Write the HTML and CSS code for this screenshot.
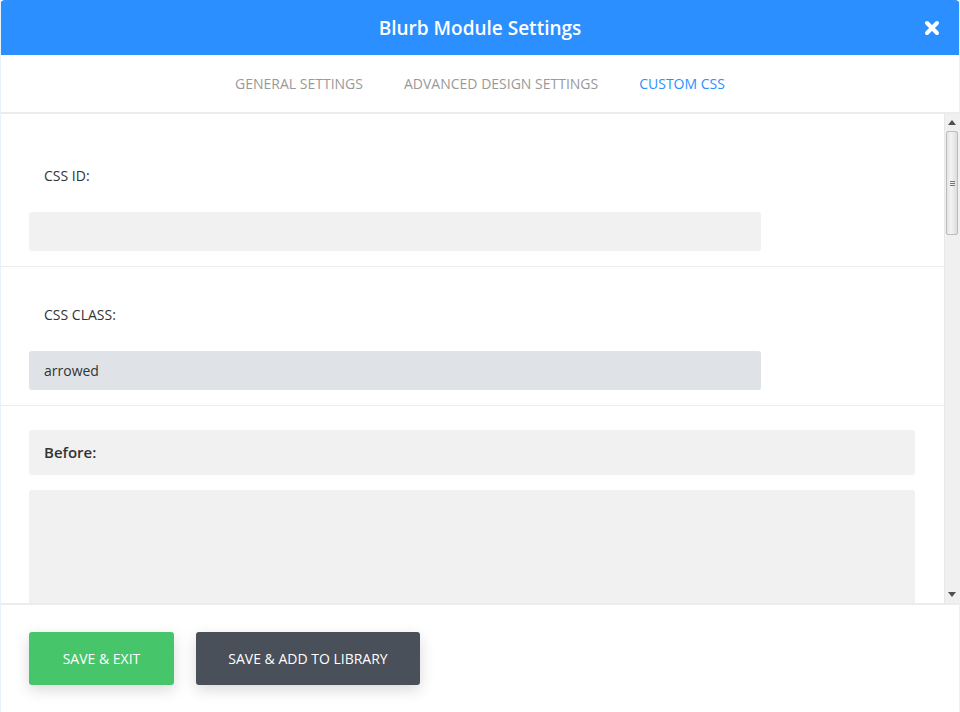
FILE: index.html
```html
<!DOCTYPE html>
<html>
<head>
<meta charset="utf-8">
<link rel="stylesheet" href="styles.css">
</head>
<body>
<div class="modal">
  <header class="head">
    <h1 class="title">Blurb Module Settings</h1>
    <span class="close"><svg width="16" height="16" viewBox="0 0 16 16"><path d="M3 3L13 13M13 3L3 13" stroke="#fff" stroke-width="4" stroke-linecap="round"/></svg></span>
  </header>
  <nav class="tabs">
    <span class="tab">General Settings</span>
    <span class="tab">Advanced Design Settings</span>
    <span class="tab active">Custom CSS</span>
  </nav>
  <div class="body">
    <div class="content">
      <section class="sec sec-first">
        <label class="lbl">CSS ID:</label>
        <div class="input"></div>
      </section>
      <section class="sec">
        <label class="lbl">CSS CLASS:</label>
        <div class="input filled">arrowed</div>
      </section>
      <section class="sec sec-code">
        <div class="code-head">Before:</div>
        <div class="code-area"></div>
      </section>
    </div>
    <div class="scrollbar">
      <div class="sb-btn"><svg width="8" height="5" viewBox="0 0 8 5"><path d="M0 5L4 0L8 5Z" fill="#505050"/></svg></div>
      <div class="sb-track">
        <div class="sb-thumb"><span class="grip"></span></div>
      </div>
      <div class="sb-btn"><svg width="8" height="5" viewBox="0 0 8 5"><path d="M0 0L8 0L4 5Z" fill="#505050"/></svg></div>
    </div>
  </div>
  <footer class="foot">
    <button class="btn green">Save &amp; Exit</button>
    <button class="btn dark">Save &amp; Add to Library</button>
  </footer>
</div>
</body>
</html>
```

FILE: styles.css
```css
* { box-sizing: border-box; }
html, body { margin: 0; padding: 0; background: #fff; }
body { font-family: "Open Sans", "Liberation Sans", sans-serif; }
.modal {
  width: 960px; height: 712px;
  display: flex; flex-direction: column;
  border-left: 1px solid #e8f2fb; border-right: 1px solid #e8f2fb;
  overflow: hidden;
}
.head {
  height: 55px; flex: none;
  background: #2b8fff;
  border-radius: 5px 5px 0 0;
  display: flex; align-items: center; justify-content: center;
  position: relative;
  margin: 0 -1px;
}
.title {
  margin: 0; color: #fff; font-size: 19px; font-weight: 600;
  letter-spacing: 0;
}
.close { position: absolute; right: 20px; top: 20px; width: 16px; height: 16px; display: flex; }
.tabs {
  height: 59px; flex: none;
  display: flex; justify-content: center; align-items: center; gap: 41px;
  border-bottom: 2px solid #ececec;
}
.tab {
  text-transform: uppercase; font-size: 14px; font-weight: 400; color: #999;
  letter-spacing: 0;
}
.tab.active { color: #2b8fff; }
.body { flex: 1; display: flex; min-height: 0; }
.content { flex: 1; overflow: hidden; }
.sec {
  padding: 38px 0 15px 28px;
  border-bottom: 1px solid #ececec;
}
.sec-first { padding-top: 52px; }
.lbl {
  display: block; font-size: 14px; color: #333; line-height: 19px;
  padding-left: 15px; margin-bottom: 27px; font-weight: 400;
}
.input {
  width: 732px; height: 39px; background: #f1f1f1; border-radius: 3px;
  font-size: 14px; color: #333; padding: 0 15px; line-height: 40px;
}
.input.filled { background: #dfe3e7; }
.sec-code { padding: 24px 0 0 28px; border-bottom: none; }
.code-head {
  width: 886px; height: 45px; background: #f1f1f1; border-radius: 3px;
  font-size: 15px; font-weight: 600; color: #333; padding: 0 15px; line-height: 45px;
}
.code-area {
  width: 886px; height: 140px; background: #f1f1f1; border-radius: 3px; margin-top: 15px;
}
.scrollbar {
  width: 15px; flex: none; background: #f0f0f0;
  display: flex; flex-direction: column;
  border-left: 1px solid #e8e8e8;
}
.sb-btn { height: 17px; display: flex; align-items: center; justify-content: center; }
.sb-track { flex: 1; }
.sb-thumb {
  margin: 0 1px; height: 104px; background: linear-gradient(to right, #e4e4e4, #f4f4f4 40%, #dcdcdc);
  border: 1px solid #bcbcbc; border-radius: 2px;
  display: flex; align-items: center; justify-content: center;
}
.grip { width: 5px; height: 5px; border-top: 1px solid #777; border-bottom: 1px solid #777; position: relative; }
.grip::after { content: ""; position: absolute; left: 0; right: 0; top: 1px; border-top: 1px solid #777; }
.foot {
  height: 109px; flex: none; border-top: 2px solid #ececec;
  display: flex; align-items: flex-start; gap: 22px;
  padding: 27px 0 0 28px;
}
.btn {
  height: 53px; border: none; border-radius: 3px; color: #fff;
  font-family: "Open Sans", "Liberation Sans", sans-serif;
  font-size: 14px; font-weight: 500; text-transform: uppercase;
  box-shadow: 0 5px 15px rgba(0,0,0,0.15);
  padding: 0;
}
.btn.green { width: 145px; background: #47c56b; }
.btn.dark { width: 224px; background: #4a5059; }
```
